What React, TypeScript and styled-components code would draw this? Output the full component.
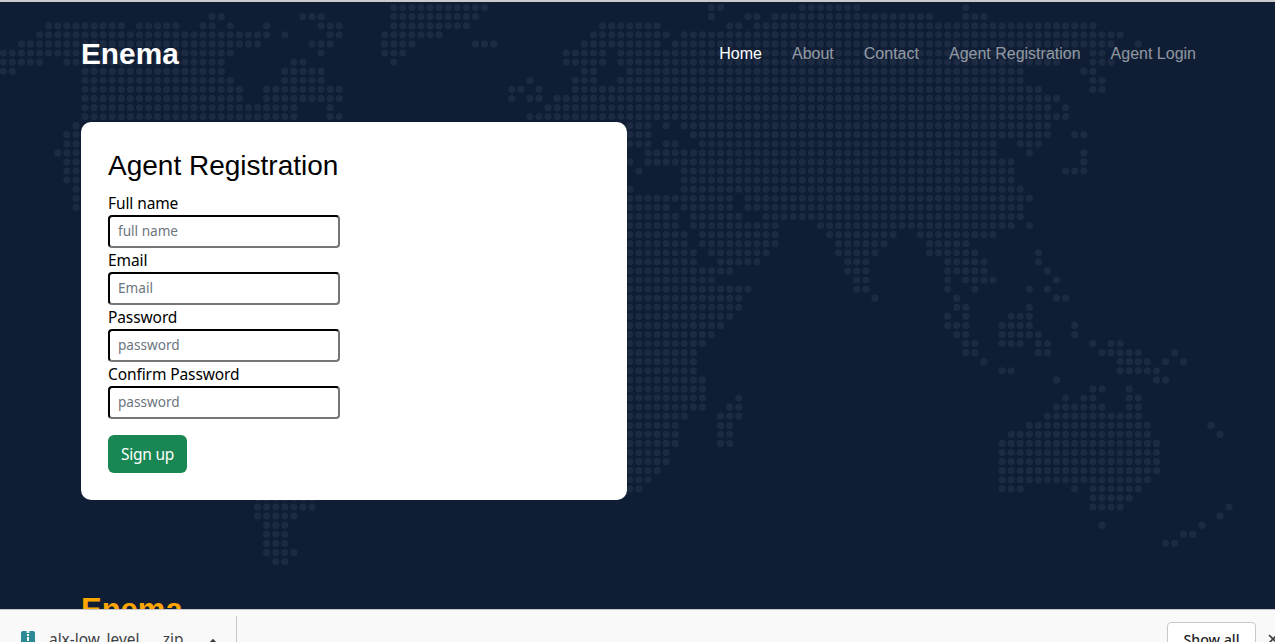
import React from 'react'
import styled, { createGlobalStyle } from 'styled-components'

const UI_FONT = `'Noto Sans', 'Open Sans', sans-serif`
const HEAD_FONT = `'Liberation Sans', Arial, sans-serif`

const GlobalStyle = createGlobalStyle`
  html, body {
    margin: 0;
    padding: 0;
    height: 100%;
    overflow: hidden;
    background: #0f1e34;
  }
  * {
    box-sizing: border-box;
  }
`

const Page = styled.div`
  display: flex;
  flex-direction: column;
  height: 642px;
  border-top: 2px solid #c9cbcf;
  overflow: hidden;
`

const Main = styled.main`
  position: relative;
  flex: 1;
  min-height: 0;
  overflow: hidden;
  background: #0f1e34;
  padding: 0 81px;
`

const MapLayer = styled.svg`
  position: absolute;
  top: -2px;
  left: 0;
  width: 1275px;
  height: 642px;
`

const Content = styled.div`
  position: relative;
`

const Navbar = styled.nav`
  display: flex;
  align-items: center;
  justify-content: space-between;
  height: 104px;
  margin-right: -2px;
`

const Brand = styled.a`
  font: bold 29.8px ${HEAD_FONT};
  color: #fff;
`

const NavLinks = styled.div`
  display: flex;
  gap: 30px;
`

const NavLink = styled.a<{ $active?: boolean }>`
  font: 16px ${HEAD_FONT};
  color: ${p => (p.$active ? '#fff' : 'rgba(255, 255, 255, 0.55)')};
`

const Card = styled.section`
  width: 546px;
  height: 378px;
  margin-top: 16px;
  padding: 27px;
  background: #fff;
  border-radius: 10px;
`

const Title = styled.h1`
  margin: 0 0 8px;
  font: 28px/34px ${HEAD_FONT};
  color: #000;
`

const Form = styled.form`
  display: flex;
  flex-direction: column;
  align-items: flex-start;
`

const Label = styled.label`
  display: block;
  font: 15.5px/24px ${UI_FONT};
  letter-spacing: -0.1px;
  color: #000;
`

const Input = styled.input`
  display: block;
  width: 232px;
  height: 33px;
  padding: 0 8px 2px;
  border: 2px inset #767676;
  border-color: #212121 #767676 #767676 #212121;
  border-radius: 4px;
  background: #fff;
  font: 13.6px ${UI_FONT};
  outline: none;

  &::placeholder {
    color: #6c757d;
  }
`

const SubmitButton = styled.button`
  width: 79px;
  height: 38px;
  margin-top: 16px;
  padding: 0;
  border: 0;
  border-radius: 6px;
  background: #198754;
  color: #fff;
  font: 15.5px ${UI_FONT};
  letter-spacing: -0.25px;
`

const FooterTitle = styled.h2`
  margin: 92px 0 0;
  font: bold 31px/36px ${HEAD_FONT};
  color: #ffa500;
`

const Shelf = styled.footer`
  flex: none;
  display: flex;
  align-items: flex-start;
  height: 33px;
  overflow: hidden;
  background: #f9f9fa;
  border-top: 1px solid #c6c7c9;
`

const DownloadItem = styled.div`
  display: flex;
  align-items: flex-start;
  width: 236px;
  height: 60px;
  padding: 21px 0 0 21px;
  flex: none;
`

const FileName = styled.span`
  margin: -1px 0 0 14px;
  width: 134px;
  font: 15.4px/20px ${UI_FONT};
  color: #3c4043;
  white-space: nowrap;
`

const Chevron = styled.svg`
  margin: 7px 0 0 24px;
`

const ShelfDivider = styled.div`
  flex: none;
  width: 1px;
  height: 60px;
  margin-top: 6px;
  background: #c4c5c7;
`

const ShowAll = styled.button`
  flex: none;
  width: 89px;
  height: 35px;
  margin: 12px 0 0 930px;
  padding: 0;
  border: 1px solid #c8c9cc;
  border-radius: 4px;
  background: #fff;
  color: #202124;
  font: 500 14.2px ${UI_FONT};
`

const CloseIcon = styled.svg`
  flex: none;
  margin: 24px 0 0 12px;
`

// col ranges per row of the dot grid, row 0 sits at the top of the page
const MAP_ROWS = [
  '43-53 78-79 88-94 106',
  '23-24 33-35 43-52 78 82-83 85-102 106-108',
  '5-13 15-19 22-23 25 29 35-37 43-51 66-72 80-81 83-120',
  '4-29 31 36-37 42-48 65-73 75-123',
  '2-28 34-36 42-45 52-54 64-72 74-122 125',
  '0-25 35 42-44 62-66 68-118 120-121',
  '0-4 7-24 32-33 43 62-66 68-116 120-122',
  '0-1 9-24 31-35 64-65 69-112 119-120',
  '9-25 31-35 58 63-65 68-112 120-121',
  '9-26 29-37 56-57 59 63-114 120-121',
  '9-26 29-37 56 58-59 61-116',
  '9-32 36 60-115 117',
  '9-32 36-37 58-117',
  '8 69-71 73 75-115',
  '7-8 69-71 76-115 118-119',
  '7-8 69-71 73-74 77-109 112-114',
  '6-8 71-109 113 119',
  '7-8 69 71-111 119',
  '7-8 70 75-111 117-119',
  '7-8 75-111',
  '8 69 75-112',
  '8 69-80 82-113',
  '8 69-73 75-80 82-112',
  '69-74 76-81 84-112',
  '69-74 76-85 90-111 113',
  '69-75 77-85 91-98 101-109',
  '69-75 77-85 92-97 102-106',
  '69-76 78-84 92-96 102-107 114',
  '69-76 79-83 93-95 104-108 114',
  '69-80 93-95 104-108 115',
  '69-78 94-95 104 106-109 116',
  '69-82 94-95 104 107 113 115',
  '69-81 96 105 116-117',
  '69-81 105-106 113',
  '69-80 104 106 111-113',
  '69-79 104-106 110-113 118',
  '69-78 105-106 110-114 118',
  '69-77 106-107 110-112 114-115 120 122-123',
  '69-76 106-107 114-115 121-125 129',
  '69-76 108 123-126 128 130',
  '69-76 110-111 123-127',
  '69-77 116 127-128',
  '69-77 120-121 124',
  '69-77 81 117 119-120 124-125',
  '69-77 80-81 116-121 124-125',
  '69-75 79-81 115-125',
  '69-74 79-80 113-126 133',
  '69-74 79-80 111-126 134',
  '69-74 79-80 110-127',
  '69-73 110-127',
  '69-73 110-127',
  '69-72 110-127',
  '69-71 110-126',
  '69-70 110-112 118 120-125',
  '28-34 120-124',
  '28-34 120-123 135',
  '28-32 134',
  '29-31 121 132',
  '29-31 130-131',
  '29-31 128-129',
  '29-32',
  '30-31',
]

const mapDots = MAP_ROWS.flatMap((row, r) =>
  row.split(' ').flatMap(range => {
    const [from, to = from] = range.split('-').map(Number)
    const dots = []
    for (let c = from; c <= to; c++) dots.push({ c, r })
    return dots
  })
)

const WorldMap = () => (
  <MapLayer viewBox="0 0 1275 642" aria-hidden="true">
    {mapDots.map(({ c, r }) => (
      <circle key={`${c}-${r}`} cx={3.3 + c * 9.08} cy={7.6 + r * 9.08} r={3.6} fill="#1d2b42" />
    ))}
  </MapLayer>
)

const ZipIcon = () => (
  <svg width="14" height="18" viewBox="0 0 14 18">
    <rect width="14" height="18" rx="2" fill="#2b8a94" />
    <rect x="5.5" y="0" width="3" height="2" fill="#d8eeee" />
    <rect x="6" y="3" width="2" height="2" fill="#fff" />
    <rect x="6" y="6" width="2" height="4" fill="#fff" />
  </svg>
)

const fields = [
  { label: 'Full name', placeholder: 'full name', type: 'text' },
  { label: 'Email', placeholder: 'Email', type: 'email' },
  { label: 'Password', placeholder: 'password', type: 'password' },
  { label: 'Confirm Password', placeholder: 'password', type: 'password' },
]

const links = ['Home', 'About', 'Contact', 'Agent Registration', 'Agent Login']

export default function App() {
  return (
    <>
      <GlobalStyle />
      <Page>
        <Main>
          <WorldMap />
          <Content>
            <Navbar>
              <Brand>Enema</Brand>
              <NavLinks>
                {links.map((link, i) => (
                  <NavLink key={link} $active={i === 0}>
                    {link}
                  </NavLink>
                ))}
              </NavLinks>
            </Navbar>
            <Card>
              <Title>Agent Registration</Title>
              <Form onSubmit={e => e.preventDefault()}>
                {fields.map(field => (
                  <div key={field.label}>
                    <Label>{field.label}</Label>
                    <Input type={field.type} placeholder={field.placeholder} />
                  </div>
                ))}
                <SubmitButton>Sign up</SubmitButton>
              </Form>
            </Card>
            <FooterTitle>Enema</FooterTitle>
          </Content>
        </Main>
        <Shelf>
          <DownloadItem>
            <ZipIcon />
            <FileName>alx-low_level_....zip</FileName>
            <Chevron width="12" height="8" viewBox="0 0 12 8">
              <path d="M1 7 L6 2 L11 7" fill="none" stroke="#3c4043" strokeWidth="1.6" />
            </Chevron>
          </DownloadItem>
          <ShelfDivider />
          <ShowAll>Show all</ShowAll>
          <CloseIcon width="10" height="10" viewBox="0 0 10 10">
            <path d="M1 1 L9 9 M9 1 L1 9" fill="none" stroke="#3c4043" strokeWidth="1.6" />
          </CloseIcon>
        </Shelf>
      </Page>
    </>
  )
}
